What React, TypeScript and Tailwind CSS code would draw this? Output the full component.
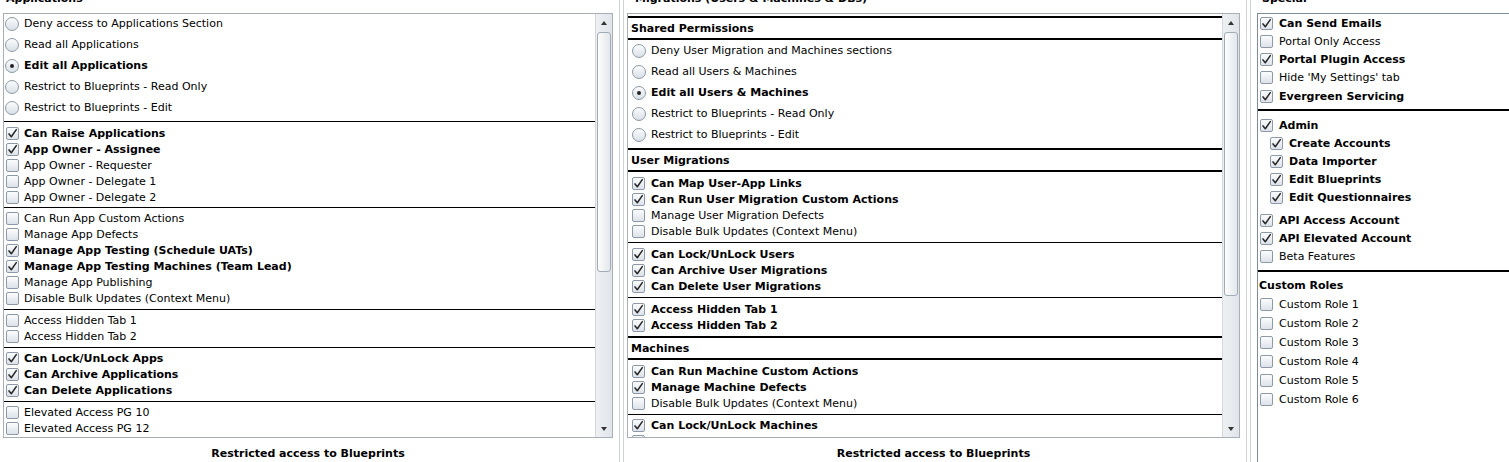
import React from "react";

type Item = { label: string; checked?: boolean };

const font = "font-['DejaVu_Sans',Verdana,sans-serif]";

function Check({ checked }: { checked?: boolean }) {
  return (
    <span className="relative block w-[13px] h-[13px] shrink-0 rounded-[2px] border border-[#8d99a6] bg-linear-to-b from-[#fbfcfd] to-[#dde3ea]">
      {checked && (
        <svg viewBox="0 0 13 13" className="absolute -left-px -top-px w-[13px] h-[13px]">
          <path
            d="M3 6.9 L5.3 9.7 L10.3 2.6"
            fill="none"
            stroke="#262626"
            strokeWidth="1.5"
            strokeLinecap="round"
            strokeLinejoin="round"
          />
        </svg>
      )}
    </span>
  );
}

function Radio({ checked }: { checked?: boolean }) {
  return (
    <span className="flex items-center justify-center w-[14px] h-[14px] shrink-0 rounded-full border border-[#8d99a6] bg-linear-to-b from-[#fbfcfd] to-[#d9e0e7]">
      {checked && <span className="w-[4px] h-[4px] rounded-full bg-[#222]" />}
    </span>
  );
}

function Row({ it, radio, cls, gap }: { it: Item; radio?: boolean; cls: string; gap: string }) {
  return (
    <div className={"flex items-center " + cls}>
      {radio ? <Radio checked={it.checked} /> : <Check checked={it.checked} />}
      <span className={it.checked ? "font-bold whitespace-nowrap " + gap : "whitespace-nowrap " + gap}>{it.label}</span>
    </div>
  );
}

function ScrollBar({ thumb }: { thumb: string }) {
  return (
    <div className="w-[17px] shrink-0 flex flex-col bg-linear-to-r from-[#eef0f3] to-[#e1e5ea] border-l border-[#d3d8de]">
      <div className="h-[17px] flex items-center justify-center">
        <span className="w-0 h-0 border-x-[3.5px] border-x-transparent border-b-[4px] border-b-[#333]" />
      </div>
      <div className="flex-1 px-px">
        <div className={"rounded-[3px] border border-[#a2abb5] bg-linear-to-r from-[#fdfdfd] to-[#e3e7eb] " + thumb} />
      </div>
      <div className="h-[17px] flex items-center justify-center">
        <span className="w-0 h-0 border-x-[3.5px] border-x-transparent border-t-[4px] border-t-[#333]" />
      </div>
    </div>
  );
}

const appRadios: Item[] = [
  { label: "Deny access to Applications Section" },
  { label: "Read all Applications" },
  { label: "Edit all Applications", checked: true },
  { label: "Restrict to Blueprints - Read Only" },
  { label: "Restrict to Blueprints - Edit" },
];

const appGroups: Item[][] = [
  [
    { label: "Can Raise Applications", checked: true },
    { label: "App Owner - Assignee", checked: true },
    { label: "App Owner - Requester" },
    { label: "App Owner - Delegate 1" },
    { label: "App Owner - Delegate 2" },
  ],
  [
    { label: "Can Run App Custom Actions" },
    { label: "Manage App Defects" },
    { label: "Manage App Testing (Schedule UATs)", checked: true },
    { label: "Manage App Testing Machines (Team Lead)", checked: true },
    { label: "Manage App Publishing" },
    { label: "Disable Bulk Updates (Context Menu)" },
  ],
  [{ label: "Access Hidden Tab 1" }, { label: "Access Hidden Tab 2" }],
  [
    { label: "Can Lock/UnLock Apps", checked: true },
    { label: "Can Archive Applications", checked: true },
    { label: "Can Delete Applications", checked: true },
  ],
  [
    { label: "Elevated Access PG 10" },
    { label: "Elevated Access PG 12" },
    { label: "Elevated Access PG 14" },
    { label: "Elevated Access PG 16" },
  ],
];

const migRadios: Item[] = [
  { label: "Deny User Migration and Machines sections" },
  { label: "Read all Users & Machines" },
  { label: "Edit all Users & Machines", checked: true },
  { label: "Restrict to Blueprints - Read Only" },
  { label: "Restrict to Blueprints - Edit" },
];

const userGroups: Item[][] = [
  [
    { label: "Can Map User-App Links", checked: true },
    { label: "Can Run User Migration Custom Actions", checked: true },
    { label: "Manage User Migration Defects" },
    { label: "Disable Bulk Updates (Context Menu)" },
  ],
  [
    { label: "Can Lock/UnLock Users", checked: true },
    { label: "Can Archive User Migrations", checked: true },
    { label: "Can Delete User Migrations", checked: true },
  ],
  [
    { label: "Access Hidden Tab 1", checked: true },
    { label: "Access Hidden Tab 2", checked: true },
  ],
];

const machineGroups: Item[][] = [
  [
    { label: "Can Run Machine Custom Actions", checked: true },
    { label: "Manage Machine Defects", checked: true },
    { label: "Disable Bulk Updates (Context Menu)" },
  ],
  [
    { label: "Can Lock/UnLock Machines", checked: true },
    { label: "Can Archive Machines", checked: true },
    { label: "Can Delete Machines", checked: true },
  ],
];

const special: Item[] = [
  { label: "Can Send Emails", checked: true },
  { label: "Portal Only Access" },
  { label: "Portal Plugin Access", checked: true },
  { label: "Hide 'My Settings' tab" },
  { label: "Evergreen Servicing", checked: true },
];

const adminSubs: Item[] = [
  { label: "Create Accounts", checked: true },
  { label: "Data Importer", checked: true },
  { label: "Edit Blueprints", checked: true },
  { label: "Edit Questionnaires", checked: true },
];

const apiItems: Item[] = [
  { label: "API Access Account", checked: true },
  { label: "API Elevated Account", checked: true },
  { label: "Beta Features" },
];

const roles = [1, 2, 3, 4, 5, 6];

function ColumnHeader({ text, pad }: { text: string; pad: string }) {
  return (
    <div className={"h-[13px] overflow-hidden " + pad}>
      <div className="-mt-[8px] leading-[13px] font-bold whitespace-nowrap">{text}</div>
    </div>
  );
}

function Footer() {
  return <div className="mt-[9px] leading-[13px] font-bold text-center">Restricted access to Blueprints</div>;
}

function Separator() {
  return <div className="w-[5px] shrink-0 self-stretch border-x border-[#cfd3d8]" />;
}

function SectionHeader({ text }: { text: string }) {
  return (
    <div className="h-[24px] flex items-center pl-[3px] border-y-2 border-black font-bold whitespace-nowrap">{text}</div>
  );
}

export default function App() {
  return (
    <div className={"w-[1509px] h-[462px] overflow-hidden bg-white text-black text-[11px] leading-[13px] flex " + font}>
      {/* Applications */}
      <div className="w-[619px] shrink-0 pl-[3px]">
        <ColumnHeader text="Applications" pad="pl-[3px]" />
        <div className="flex h-[425px] w-[610px] border border-[#a7aeb6]">
          <div className="flex-1 overflow-hidden">
            <div className="flex flex-col gap-[4px] pl-px pt-px pb-[5px] border-b border-black">
              {appRadios.map((it) => (
                <Row key={it.label} it={it} radio cls="h-[17px]" gap="ml-[5px]" />
              ))}
            </div>
            {appGroups.map((g, i) => (
              <div
                key={i}
                className={
                  i === 0
                    ? "pl-[2px] pt-[3.5px] pb-[1.5px] border-b border-black"
                    : "pl-[2px] pt-[2.5px] pb-[2.5px] border-b border-black"
                }
              >
                {g.map((it) => (
                  <Row key={it.label} it={it} cls="h-[16px]" gap="ml-[5px]" />
                ))}
              </div>
            ))}
          </div>
          <ScrollBar thumb="mt-px h-[240px]" />
        </div>
        <div className="w-[610px]">
          <Footer />
        </div>
      </div>

      <Separator />

      {/* Migrations */}
      <div className="w-[622px] shrink-0 pl-[3px]">
        <ColumnHeader text="Migrations (Users & Machines & DBs)" pad="pl-[8px]" />
        <div className="flex h-[425px] w-[613px] border border-[#a7aeb6]">
          <div className="flex-1 overflow-hidden pt-[2px]">
            <SectionHeader text="Shared Permissions" />
            <div className="flex flex-col gap-[4px] pl-[4px] pt-[2px] pb-[5px]">
              {migRadios.map((it) => (
                <Row key={it.label} it={it} radio cls="h-[17px]" gap="ml-[5px]" />
              ))}
            </div>
            <SectionHeader text="User Migrations" />
            {userGroups.map((g, i) => (
              <div
                key={i}
                className={
                  i < userGroups.length - 1
                    ? "pl-[4px] pt-[3.5px] pb-[2.5px] border-b border-black"
                    : "pl-[4px] pt-[3.5px] pb-[2.5px]"
                }
              >
                {g.map((it) => (
                  <Row key={it.label} it={it} cls="h-[16px]" gap="ml-[6px]" />
                ))}
              </div>
            ))}
            <SectionHeader text="Machines" />
            {machineGroups.map((g, i) => (
              <div key={i} className="pl-[4px] pt-[3px] pb-[2.5px] border-b border-black">
                {g.map((it) => (
                  <Row key={it.label} it={it} cls="h-[16px]" gap="ml-[6px]" />
                ))}
              </div>
            ))}
          </div>
          <ScrollBar thumb="mt-px h-[264px]" />
        </div>
        <div className="w-[613px]">
          <Footer />
        </div>
      </div>

      <Separator />

      {/* Special */}
      <div className="flex-1 pl-[6px]">
        <ColumnHeader text="Special" pad="pl-[5px]" />
        <div className="h-[460px] w-[300px] border-t border-l border-[#7f8c9a]">
          <div className="pl-[2px] pb-[4px] border-b-2 border-black">
            {special.map((it) => (
              <Row key={it.label} it={it} cls="h-[18.25px]" gap="ml-[6px]" />
            ))}
          </div>
          <div className="pt-[5px] pb-[5px] border-b-2 border-black">
            <div className="pl-[2px]">
              <Row it={{ label: "Admin", checked: true }} cls="h-[18px]" gap="ml-[6px]" />
            </div>
            <div className="pl-[12px] mb-[5px]">
              {adminSubs.map((it) => (
                <Row key={it.label} it={it} cls="h-[18px]" gap="ml-[6px]" />
              ))}
            </div>
            <div className="pl-[2px]">
              {apiItems.map((it) => (
                <Row key={it.label} it={it} cls="h-[18px]" gap="ml-[6px]" />
              ))}
            </div>
          </div>
          <div className="h-[23px] pt-[7px] pl-px font-bold">Custom Roles</div>
          <div className="pl-[2px]">
            {roles.map((n) => (
              <Row key={n} it={{ label: "Custom Role " + n }} cls="h-[19px]" gap="ml-[6px]" />
            ))}
          </div>
        </div>
      </div>
    </div>
  );
}
